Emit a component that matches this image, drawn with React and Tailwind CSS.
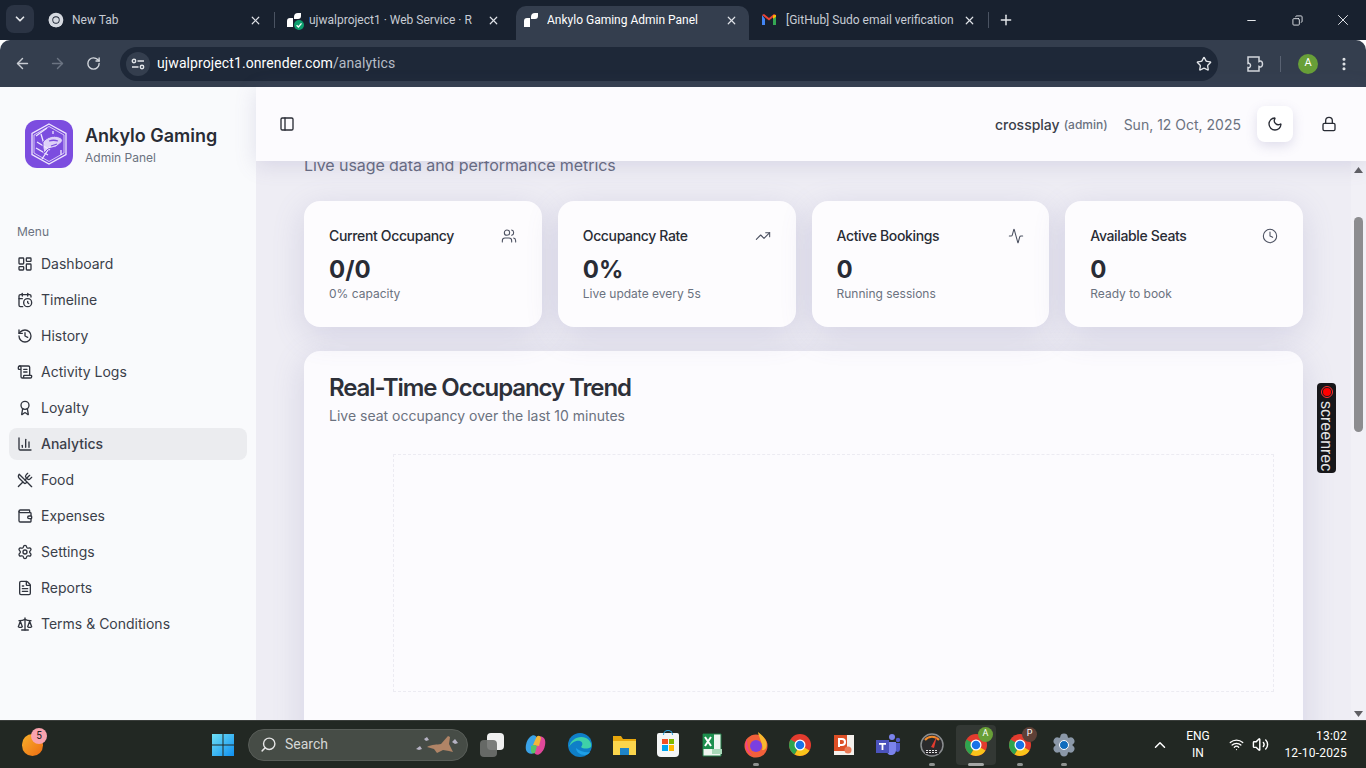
import {
  Activity, Award, ChartColumn, ChevronDown, ChevronUp, Clock, EllipsisVertical, ArrowLeft, ArrowRight, RotateCw,
  FileText, CalendarClock, History, LayoutDashboard, Lock, Minus, Moon, PanelLeft, Plus, Scale, ScrollText,
  Search, Settings, Star, TrendingUp, Users, UtensilsCrossed, Volume2, Wallet, Wifi, X, Copy,
} from 'lucide-react'

const NAV = [
  { label: 'Dashboard', icon: LayoutDashboard },
  { label: 'Timeline', icon: CalendarClock },
  { label: 'History', icon: History },
  { label: 'Activity Logs', icon: ScrollText },
  { label: 'Loyalty', icon: Award },
  { label: 'Analytics', icon: ChartColumn, active: true },
  { label: 'Food', icon: UtensilsCrossed },
  { label: 'Expenses', icon: Wallet },
  { label: 'Settings', icon: Settings },
  { label: 'Reports', icon: FileText },
  { label: 'Terms & Conditions', icon: Scale },
]

const STATS = [
  { title: 'Current Occupancy', value: '0/0', note: '0% capacity', icon: Users },
  { title: 'Occupancy Rate', value: '0%', note: 'Live update every 5s', icon: TrendingUp },
  { title: 'Active Bookings', value: '0', note: 'Running sessions', icon: Activity },
  { title: 'Available Seats', value: '0', note: 'Ready to book', icon: Clock },
]

function ChromeIcon({ size = 28, mono }) {
  return (
    <svg width={size} height={size} viewBox="0 0 48 48">
      <circle cx="24" cy="24" r="22" fill={mono ? '#d5d9e0' : '#e33b2e'} />
      <path d="M24 24 L43 35 A22 22 0 0 1 13 43 Z" fill={mono ? '#d5d9e0' : '#f9c31a'} />
      <path d="M24 24 L13 43 A22 22 0 0 1 5 13 Z" fill={mono ? '#d5d9e0' : '#2ea44f'} />
      <circle cx="24" cy="24" r="11" fill={mono ? '#18212f' : '#fff'} />
      <circle cx="24" cy="24" r="8.5" fill={mono ? '#d5d9e0' : '#1a73e8'} />
    </svg>
  )
}

function RenderMark({ badge }) {
  return (
    <span className="relative block w-4 h-4">
      <svg width="16" height="16" viewBox="0 0 16 16">
        <path d="M1 15V9a3 3 0 0 1 3-3h3v9z M8 5a4 4 0 0 1 4-4h3v3a3 3 0 0 1-3 3H8z" fill="#fff" />
      </svg>
      {badge && (
        <svg className="absolute -right-0.5 -bottom-0.5" width="10" height="10" viewBox="0 0 10 10">
          <circle cx="5" cy="5" r="5" fill="#0d9f6e" />
          <path d="M2.6 5.2 4.4 7 7.5 3.4" stroke="#fff" strokeWidth="1.3" fill="none" />
        </svg>
      )}
    </span>
  )
}

function GmailMark() {
  return (
    <svg width="16" height="16" viewBox="0 0 16 16">
      <path d="M1 3v10h3V7z" fill="#4285f4" />
      <path d="M12 7v6h3V3z" fill="#34a853" />
      <path d="M1 3 8 8.5 15 3l-2-1-5 4-5-4z" fill="#ea4335" />
      <path d="M12 3.2V7l3-2.2V3z" fill="#fbbc04" />
    </svg>
  )
}

function BrowserChrome() {
  return (
    <div className="h-[87px] shrink-0 font-['Roboto',sans-serif]">
      <div className="h-[40px] bg-[#18212f] flex items-end relative">
        <div className="ml-[6px] mb-[7px] w-[28px] h-[28px] rounded-lg bg-[#2b3444] flex items-center justify-center shrink-0">
          <ChevronDown size={14} strokeWidth={3} className="text-[#e3e6ea]" />
        </div>
        <div className="flex items-end ml-[5px]">
          <div className="w-[235px] flex items-center h-[34px] pb-[6px] pl-[9px] pr-[12px] text-[#c7ccd4] shrink-0">
            <ChromeIcon size={16} mono />
            <span className="ml-[8px] flex-1 text-[12px]">New Tab</span>
            <X size={13} strokeWidth={2.2} className="text-[#dfe2e7]" />
          </div>
          <div className="w-px h-[16px] bg-[#4a5362] mb-[12px]" />
          <div className="w-[241px] h-[34px] pb-[6px] pl-[11px] pr-[16px] flex items-center text-[#c7ccd4] shrink-0">
            <RenderMark badge />
            <span className="ml-[7px] flex-1 min-w-0 overflow-hidden whitespace-nowrap text-[12px]">ujwalproject1 · Web Service · R</span>
            <X size={13} strokeWidth={2.2} className="shrink-0 ml-2 text-[#dfe2e7]" />
          </div>
          <div className="w-[233px] h-[34px] pb-[6px] pl-[7px] pr-[11px] flex items-center bg-[#343e4e] rounded-t-[10px] text-white shrink-0">
            <RenderMark />
            <span className="ml-[8px] flex-1 min-w-0 overflow-hidden whitespace-nowrap text-[12px]">Ankylo Gaming Admin Panel</span>
            <X size={13} strokeWidth={2.2} className="shrink-0 ml-2 text-[#dfe2e7]" />
          </div>
          <div className="w-[239px] h-[34px] pb-[6px] pl-[12px] pr-[12px] flex items-center text-[#c7ccd4] shrink-0">
            <GmailMark />
            <span className="ml-[9px] flex-1 min-w-0 overflow-hidden whitespace-nowrap text-[12px]">[GitHub] Sudo email verification</span>
            <X size={13} strokeWidth={2.2} className="shrink-0 ml-2 text-[#dfe2e7]" />
          </div>
          <div className="w-px h-[16px] bg-[#4a5362] mb-[12px]" />
          <div className="w-[33px] h-[34px] pb-[6px] flex items-center justify-center">
            <Plus size={16} strokeWidth={2.2} className="text-[#e3e6ea]" />
          </div>
        </div>
        <div className="ml-auto h-full flex items-center text-[#e3e6ea]">
          <div className="w-[46px] flex justify-center"><Minus size={13} /></div>
          <div className="w-[46px] flex justify-center"><Copy size={11} className="-scale-x-100" /></div>
          <div className="w-[46px] flex justify-center"><X size={18} strokeWidth={1.3} /></div>
        </div>
      </div>
      <div className="h-[47px] bg-[#343e4e] rounded-tl-[10px] rounded-tr-[10px] flex items-center pl-[14px] pr-[14px]">
        <ArrowLeft size={17} className="text-[#c8ccd3]" />
        <ArrowRight size={17} className="ml-[18px] text-[#6b7482]" />
        <RotateCw size={15} strokeWidth={2.2} className="ml-[20px] text-[#d3d7dd]" />
        <div className="ml-[19px] h-[34px] flex-1 rounded-full bg-[#1e2838] flex items-center pl-[6px] pr-[6px]">
          <span className="w-[24px] h-[24px] rounded-full bg-[#343e4e] flex items-center justify-center">
            <svg width="14" height="12" viewBox="0 0 14 12" fill="none" stroke="#e3e6ea" strokeWidth="1.4">
              <circle cx="3" cy="3" r="1.7" />
              <path d="M6.500 3H13M1 9h6.500" />
              <circle cx="11" cy="9" r="1.700" />
            </svg>
          </span>
          <span className="ml-[7px] text-[14px] text-white tracking-[0.1px]">ujwalproject1.onrender.com<span className="text-[#b6bcc6]">/analytics</span></span>
          <Star size={16} strokeWidth={2} className="ml-auto text-[#e3e6ea]" />
        </div>
        <svg width="18" height="18" viewBox="0 0 18 18" fill="none" stroke="#d3d7dd" strokeWidth="1.500" className="ml-[28px]">
          <path d="M2 2h11v4.500c2-1 3.500 0 3.500 2.500s-1.500 3.500-3.500 2.500V16H2v-3.500c1.500.5 2.500-.5 2.500-2S3.500 8 2 8.500z" />
        </svg>
        <div className="ml-[16px] w-px h-[16px] bg-[#596272]" />
        <div className="ml-[17px] w-5 h-5 rounded-full bg-[#689f38] text-white text-[11px] flex items-center justify-center">A</div>
        <EllipsisVertical size={16} strokeWidth={2.6} className="ml-[18px] text-[#e3e6ea]" />
      </div>
    </div>
  )
}

function AnkyloLogo() {
  return (
    <div className="w-12 h-12 rounded-xl bg-[#7c4ddf] flex items-center justify-center shrink-0">
      <svg width="40" height="44" viewBox="0 0 40 44" fill="none" stroke="#efe8fd" strokeWidth="1.3">
        <path d="M20 2 37 11.5V32.5L20 42 3 32.5V11.5z" />
        <path d="M20 4.5 35 13V31L20 39.5 5 31V13z" strokeWidth="0.8" />
        <path d="M7 14 18 6M8 20l13 8M7 26l12 7M13 37l8-12M24 9v3M32 28v5M12 12l3 10" />
        <path d="M14 20c4-5 10-7 16-5 3 1 4 3 3 5l-6 5-8 2-4 4-1-5z" fill="#efe8fd" fillOpacity="0.85" stroke="#7c4ddf" strokeWidth="1" />
        <path d="M20 19c3-1 6-1 9 0M22 24l6-2" stroke="#7c4ddf" />
      </svg>
    </div>
  )
}

function Sidebar() {
  return (
    <aside className="w-[256px] shrink-0 bg-[#f9fafc] flex flex-col">
      <div className="pl-[25px] pt-[33px] flex items-center gap-3">
        <AnkyloLogo />
        <div>
          <div className="text-[18px] leading-[28px] font-semibold text-[#292c35]">Ankylo Gaming</div>
          <div className="text-[12px] leading-[16px] text-[#6b7280]">Admin Panel</div>
        </div>
      </div>
      <div className="mt-[56px] pl-[17px] text-[12px] leading-[16px] text-[#6b7280]">Menu</div>
      <nav className="mt-[8px] px-[9px] flex flex-col gap-1">
        {NAV.map(item => (
          <div key={item.label} className={`h-8 rounded-lg flex items-center gap-2 px-2 text-[14px] text-[#3b3f4a] ${item.active ? 'bg-[#ebecef] font-medium' : ''}`}>
            <item.icon size={16} strokeWidth={2} className="text-[#30343e]" />
            <span className="mb-[2px]">{item.label}</span>
          </div>
        ))}
      </nav>
    </aside>
  )
}

function Header() {
  return (
    <header className="relative z-10 h-[74px] shrink-0 bg-[#fcfbfe] shadow-[0_4px_20px_rgba(110,105,160,0.18)] flex items-center pl-[23px] pr-[19px]">
      <PanelLeft size={16} className="text-[#292c35] mr-auto" />
      <span className="text-[14px] font-medium text-[#3b3f4a]">crossplay</span>
      <span className="ml-[4px] mt-[1px] text-[12px] font-medium text-[#6b7280]">(admin)</span>
      <span className="ml-[16px] text-[14px] text-[#6b7280]">Sun, 12 Oct, 2025</span>
      <div className="ml-[16px] w-9 h-9 rounded-lg bg-white shadow-[0_4px_12px_rgba(110,105,160,0.2)] flex items-center justify-center">
        <Moon size={16} className="text-[#292c35]" />
      </div>
      <div className="ml-[18px] w-9 h-9 flex items-center justify-center">
        <Lock size={16} className="text-[#292c35]" />
      </div>
    </header>
  )
}

function StatCard({ stat }) {
  return (
    <div className="bg-[#fdfcfe] rounded-2xl px-[25px] pt-[24px] h-[126px] shadow-[0_8px_32px_rgba(110,105,165,0.2)]">
      <div className="flex items-center justify-between h-5">
        <span className="text-[14px] font-medium tracking-[-0.35px] text-[#292c35]">{stat.title}</span>
        <stat.icon size={16} strokeWidth={1.6} className="mt-px text-[#4b5060]" />
      </div>
      <div className="mt-[11px] text-[24px] leading-[28px] font-bold text-[#292c35]">{stat.value}</div>
      <div className="text-[12px] leading-[20px] text-[#6b7280]">{stat.note}</div>
    </div>
  )
}

function Scrollbar() {
  return (
    <div className="w-[15px] shrink-0 bg-[#f1f0f6] flex flex-col items-center">
      <svg width="9" height="6" viewBox="0 0 9 6" className="mt-[6px] shrink-0"><path d="M4.5 0 9 6H0z" fill="#5f5f63" /></svg>
      <div className="mt-[44px] w-[9px] h-[215px] rounded-full bg-[#8c8c8f]" />
      <svg width="9" height="6" viewBox="0 0 9 6" className="mt-auto mb-[3px] shrink-0"><path d="M4.5 6 9 0H0z" fill="#5f5f63" /></svg>
    </div>
  )
}

function Main() {
  return (
    <main className="relative flex-1 min-w-0 flex flex-col bg-[#eeedf4]">
      <Header />
      <div className="flex-1 min-h-0 flex">
        <div className="flex-1 min-w-0 overflow-hidden px-12">
          <div className="-mt-[8px]">
            <p className="text-[16px] leading-[24px] tracking-[-0.08px] text-[#666b80]">Live usage data and performance metrics</p>
            <div className="mt-6 grid grid-cols-4 gap-4">
              {STATS.map(s => <StatCard key={s.title} stat={s} />)}
            </div>
            <section className="mt-6 bg-[#fcfbfe] rounded-2xl p-[25px] shadow-[0_8px_32px_rgba(110,105,165,0.2)] h-[500px]">
              <h2 className="text-[24px] leading-[24px] font-semibold tracking-[-1.08px] text-[#2d3039]">Real-Time Occupancy Trend</h2>
              <p className="mt-[4px] text-[14px] leading-[24px] text-[#6b7280]">Live seat occupancy over the last 10 minutes</p>
              <div className="mt-[26px] pl-[64px] pr-[4px]">
                <div className="h-[238px] border border-dashed border-[#ecebf2]" />
              </div>
            </section>
          </div>
        </div>
        <Scrollbar />
      </div>
      {/* recorder badge floats over the page */}
      <div className="absolute left-[1061px] top-[296px] w-[19px] h-[90px] rounded-[4px] bg-[#17171a] flex flex-col items-center pt-[3px]">
        <span className="w-[12px] h-[12px] rounded-full border border-[#f33] flex items-center justify-center shrink-0">
          <span className="w-2 h-2 rounded-full bg-[#f00]" />
        </span>
        <span className="mt-[3px] text-[16px] leading-[19px] text-[#e6e6e6] font-['Liberation_Sans',sans-serif] [writing-mode:vertical-rl]">screenrec</span>
      </div>
    </main>
  )
}

function Slot({ children, dot, active }) {
  return (
    <div className={`relative w-[44px] h-[44px] shrink-0 flex items-center justify-center rounded-md ${active ? 'bg-[#333834] bg-clip-content p-[2px]' : ''}`}>
      {children}
      {dot && <span className={`absolute bottom-[1px] left-1/2 -translate-x-1/2 h-[3px] rounded-full ${active ? 'w-4 bg-[#a5a8a6]' : 'w-[6px] bg-[#8e918f]'}`} />}
    </div>
  )
}

function Taskbar() {
  return (
    <div className="h-[48px] shrink-0 bg-[#222823] border-t border-[#3a3e3b] flex items-center text-white font-['Roboto',sans-serif]">
      {/* weather blob */}
      <div className="relative ml-[22px] w-[21px] h-[22px]">
        <div className="absolute inset-0 rounded-full bg-gradient-to-br from-[#f7b02a] to-[#ec6a12]" />
        <div className="absolute left-[9px] -top-[6px] w-[16px] h-[16px] rounded-full bg-[#f9a3ae] text-[#222] text-[10px] flex items-center justify-center">5</div>
      </div>
      <div className="ml-[158px] flex items-center">
        <Slot>
          <svg width="24" height="24" viewBox="0 0 24 24">
            <defs>
              <linearGradient id="win" x1="0" y1="0" x2="1" y2="1">
                <stop offset="0" stopColor="#6fe0f5" />
                <stop offset="1" stopColor="#0f8ff0" />
              </linearGradient>
            </defs>
            <path d="M1 1h10.5v10.5H1zM12.500 1H23v10.500H12.500zM1 12.500h10.500V23H1zM12.500 12.500H23V23H12.500z" fill="url(#win)" />
          </svg>
        </Slot>
        <div className="ml-[3px] w-[220px] h-[32px] rounded-full bg-[#464c46] border border-[#585d58] flex items-center pl-[11px] relative shrink-0">
          <Search size={17} className="text-[#e6e6e6] -scale-x-100" />
          <span className="ml-[8px] text-[14px] text-[#d5d7d5]">Search</span>
          <svg className="absolute right-[5px] top-[3px]" width="48" height="24" viewBox="0 0 48 24">
            <path d="M13 14c5-3 10-2 14-3l7-8 2 1-1 7 4 8-4-1-6-1-6 3-3-4z" fill="#b08466" />
            <path d="M2 16l4-3 2 3-3 1zM10 6l3-2 2 3-3 1zM38 9l3-3 3 4-3 1z" fill="#b6b3c4" />
          </svg>
        </div>
        <div className="ml-[2px] flex items-center">
          <Slot>
            <div className="relative w-[24px] h-[24px]">
              <div className="absolute right-0 top-0 w-[17px] h-[17px] rounded-sm bg-[#f0f0f0]" />
              <div className="absolute left-0 bottom-0 w-[17px] h-[17px] rounded-sm bg-[#6e706e]/90" />
            </div>
          </Slot>
          <Slot>
            <svg width="24" height="24" viewBox="0 0 24 24">
              <path d="M6 4c3-3 6-2 7 1l-3 14c-1 3-7 2-8-2-1-5 1-10 4-13z" fill="#3aa3e8" />
              <path d="M17 20c-3 3-6 2-7-1l3-14c1-3 7-2 8 2 1 5-1 10-4 13z" fill="#e0489a" />
              <path d="M9 12l3-7c1-3 4-3 5 0l-2 8z" fill="#f2b63a" />
              <path d="M7 13l3-1 3 1-2 7c-2 1-4 0-4-2z" fill="#54c46a" />
            </svg>
          </Slot>
          <Slot>
            <svg width="26" height="26" viewBox="0 0 26 26">
              <circle cx="13" cy="13" r="12" fill="#0f7fc8" />
              <path d="M2 15C4 7 12 3 19 6c4 2 6 6 5 9-3 2-8 2-10 0 2-2 2-5-1-6-4-1-9 2-11 6z" fill="#3fd1a8" />
              <path d="M9 16c0 4 4 7 9 7 2 0 4-1 5-3-4 1-9 0-14-4z" fill="#1ea0e8" />
            </svg>
          </Slot>
          <Slot>
            <svg width="25" height="24" viewBox="0 0 25 24">
              <path d="M1 3h8l2 3h13v4H1z" fill="#e8a70c" />
              <path d="M1 8h23v14H1z" fill="#fbd54c" />
              <path d="M8 15h9v7H8z" fill="#1f84c8" />
            </svg>
          </Slot>
          <Slot>
            <div className="relative w-[22px] h-[24px] bg-[#f4f6f6] rounded-b-[4px] rounded-t-[2px] flex items-center justify-center">
              <span className="grid grid-cols-2 gap-px w-[12px] h-[12px]">
                <span className="bg-[#f25022]" /><span className="bg-[#7fba00]" /><span className="bg-[#00a4ef]" /><span className="bg-[#ffb900]" />
              </span>
              <span className="absolute -top-[3px] left-[6px] w-[10px] h-[5px] rounded-t-full border border-b-0 border-[#2ea3e0]" />
            </div>
          </Slot>
          <Slot>
            <svg width="24" height="26" viewBox="0 0 24 26">
              <path d="M3 2h18v22H3z" fill="#eef5ef" stroke="#1f7a44" />
              <path d="M3 2h11v15H3z" fill="#1d8f4e" />
              <path d="M5 5l6 9M11 5l-6 9" stroke="#fff" strokeWidth="2" />
              <path d="M12 17h10v5H12z" fill="#a8d8b8" />
            </svg>
          </Slot>
          <Slot dot>
            <svg width="26" height="27" viewBox="0 0 26 27">
              <circle cx="13" cy="15" r="11.500" fill="#f2603a" />
              <path d="M15 1c2 2 6 4 8 9 2 6-1 10-4 9 2-4-3-12-4-18z" fill="#f8b82e" />
              <circle cx="13" cy="15" r="6" fill="#7a3fe0" />
              <path d="M4 8c-3 6-1 13 5 16-4-5-5-10-5-16z" fill="#f43f8a" />
            </svg>
          </Slot>
          <Slot><ChromeIcon size={24} /></Slot>
          <Slot>
            <svg width="24" height="26" viewBox="0 0 24 26">
              <path d="M2 3h20v20H2z" fill="#f4f0ec" />
              <path d="M2 3h13v16H2z" fill="#dd4f26" />
              <path d="M7 15V7h3a2.500 2.500 0 0 1 0 6H7" stroke="#fff" strokeWidth="2" fill="none" />
              <circle cx="16" cy="18" r="3.500" fill="#e97a56" />
            </svg>
          </Slot>
          <Slot>
            <svg width="26" height="24" viewBox="0 0 26 24">
              <circle cx="17" cy="4" r="3" fill="#7b83eb" />
              <circle cx="23" cy="7" r="2.200" fill="#5059c9" />
              <path d="M12 9h9v8c0 3-2 5-5 5s-4-2-4-5z" fill="#7b83eb" />
              <path d="M21 10h4v6c0 2-1 3-3 3l-1-1z" fill="#5059c9" />
              <path d="M1 7h13v13H1z" fill="#4b53bc" />
              <path d="M4 10h7v1.800H8.400V17H6.600v-5.200H4z" fill="#fff" />
            </svg>
          </Slot>
          <Slot dot>
            <svg width="24" height="26" viewBox="0 0 24 26">
              <circle cx="12" cy="13" r="11" fill="#2a2a2c" stroke="#8a8d8f" strokeWidth="1.500" />
              <path d="M5 8a9 9 0 0 1 14 0" stroke="#f28b2a" strokeWidth="2" fill="none" />
              <path d="M11 15 17 4l-3 12z" fill="#e33b2e" />
              <path d="M5 17h14v5H5z" fill="#2a2a2c" />
              <path d="M6 18.500h12M6 20.500h12" stroke="#e6e6e6" strokeWidth="1" strokeDasharray="2 1" />
            </svg>
          </Slot>
          <Slot dot active>
            <ChromeIcon size={24} />
            <span className="absolute right-[5px] top-[4px] w-[15px] h-[15px] rounded-full bg-[#689f38] text-white text-[9px] flex items-center justify-center">A</span>
          </Slot>
          <Slot dot>
            <ChromeIcon size={24} />
            <span className="absolute right-[5px] top-[4px] w-[15px] h-[15px] rounded-full bg-[#5d4037] text-white text-[9px] flex items-center justify-center">P</span>
          </Slot>
          <Slot dot>
            <Settings size={24} strokeWidth={3} className="text-[#8b98a8] fill-[#8b98a8]" />
            <span className="absolute left-1/2 top-1/2 -translate-x-1/2 -translate-y-1/2 w-[10px] h-[10px] rounded-full bg-[#0f6cbd] border border-white" />
          </Slot>
        </div>
      </div>
      <ChevronUp size={18} className="ml-[65px] text-white" />
      <div className="ml-[14px] w-[30px] text-center text-[12px] leading-[17px]">ENG<br />IN</div>
      <Wifi size={15} className="ml-[16px]" />
      <Volume2 size={17} className="ml-[8px]" />
      <div className="ml-auto mr-[19px] text-right text-[12px] leading-[17px] tracking-[0.2px]">13:02<br />12-10-2025</div>
    </div>
  )
}

export default function App() {
  return (
    <div className="h-screen w-full overflow-hidden flex flex-col font-['Inter',sans-serif]">
      <BrowserChrome />
      <div className="flex-1 min-h-0 flex">
        <Sidebar />
        <Main />
      </div>
      <Taskbar />
    </div>
  )
}
